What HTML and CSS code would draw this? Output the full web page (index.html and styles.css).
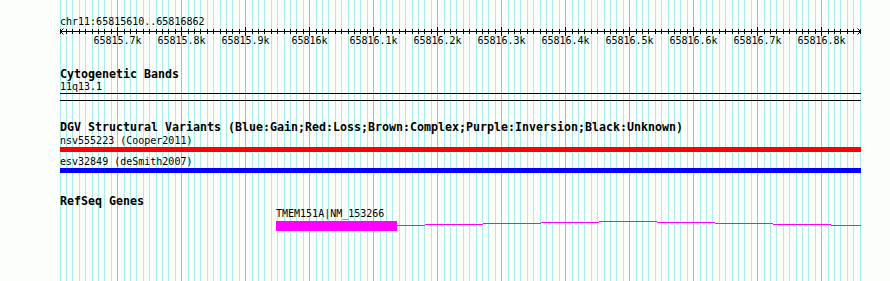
FILE: index.html
```html
<!DOCTYPE html>
<html lang="en">
<head>
  <meta charset="UTF-8" />
  <title>chr11:65815610..65816862</title>
  <link rel="stylesheet" href="styles.css">
</head>
<body>
  <div class="panel">
    <div class="coord">chr11:65815610..65816862</div>

    <svg class="ruler" width="801" height="19" viewBox="0 0 801 19">
      <defs>
        <pattern id="ticks" patternUnits="userSpaceOnUse" width="64" height="19">
          <path d="M0.5 2v5M6.5 2v5M12.5 2v5M19.5 2v5M25.5 2v5M32.5 2v5M38.5 2v5M44.5 2v5M51.5 2v5" stroke="#000" shape-rendering="crispEdges"/>
          <path d="M57.5 0v9" stroke="#000" shape-rendering="crispEdges"/>
        </pattern>
      </defs>
      <rect x="0" y="0" width="801" height="10" fill="url(#ticks)"/>
      <path d="M0 4.5H801" stroke="#000" shape-rendering="crispEdges"/>
      <path d="M3.5 1.5L0.5 4.5L3.5 7.5M797.5 1.5L800.5 4.5L797.5 7.5" stroke="#000" fill="none"/>
      <g class="tick-labels" text-anchor="middle">
        <text x="57.5" y="17">65815.7k</text>
        <text x="121.5" y="17">65815.8k</text>
        <text x="185.5" y="17">65815.9k</text>
        <text x="249.5" y="17">65816k</text>
        <text x="313.5" y="17">65816.1k</text>
        <text x="377.5" y="17">65816.2k</text>
        <text x="441.5" y="17">65816.3k</text>
        <text x="505.5" y="17">65816.4k</text>
        <text x="569.5" y="17">65816.5k</text>
        <text x="633.5" y="17">65816.6k</text>
        <text x="697.5" y="17">65816.7k</text>
        <text x="761.5" y="17">65816.8k</text>
      </g>
    </svg>

    <section class="track cyto">
      <div class="track-title">Cytogenetic Bands</div>
      <div class="feat-label">11q13.1</div>
      <div class="band"></div>
    </section>

    <section class="track dgv">
      <div class="track-title">DGV Structural Variants (Blue:Gain;Red:Loss;Brown:Complex;Purple:Inversion;Black:Unknown)</div>
      <div class="feat-label">nsv555223 (Cooper2011)</div>
      <div class="sv-bar loss"></div>
      <div class="feat-label gap">esv32849 (deSmith2007)</div>
      <div class="sv-bar gain"></div>
    </section>

    <section class="track refseq">
      <div class="track-title">RefSeq Genes</div>
      <div class="feat-label gene-label">TMEM151A|NM_153266</div>
      <svg class="gene" width="801" height="10" viewBox="0 0 801 10" shape-rendering="crispEdges">
        <rect x="216" y="0" width="121" height="10" fill="#ff00ff"/>
        <g fill="#ff00ff">
          <rect x="337" y="4" width="28" height="1"/>
          <rect x="365" y="3" width="58" height="1"/>
          <rect x="423" y="2" width="58" height="1"/>
          <rect x="481" y="1" width="58" height="1"/>
          <rect x="539" y="0" width="58" height="1"/>
          <rect x="597" y="1" width="58" height="1"/>
          <rect x="655" y="2" width="58" height="1"/>
          <rect x="713" y="3" width="58" height="1"/>
          <rect x="771" y="4" width="30" height="1"/>
        </g>
      </svg>
    </section>
  </div>
</body>
</html>
```

FILE: styles.css
```css
* { box-sizing: border-box; }

html, body {
  margin: 0;
  background: #fcfefc;
}

body {
  font-family: "DejaVu Sans Mono", monospace;
  font-size: 10px;
  color: #000;
  overflow: hidden;
}

/* track area, grid: minor line every 10bp, major every 100bp */
.panel {
  margin-left: 60px;
  width: 801px;
  height: 281px;
  padding-top: 16px;
  background-image: linear-gradient(to right,
    #a8ecec 0 1px, transparent 1px 6px,
    #a8ecec 6px 7px, transparent 7px 12px,
    #a8ecec 12px 13px, transparent 13px 19px,
    #a8ecec 19px 20px, transparent 20px 25px,
    #a8ecec 25px 26px, transparent 26px 32px,
    #a8ecec 32px 33px, transparent 33px 38px,
    #a8ecec 38px 39px, transparent 39px 44px,
    #a8ecec 44px 45px, transparent 45px 51px,
    #a8ecec 51px 52px, transparent 52px 57px,
    #88c6ec 57px 58px, transparent 58px 64px);
  background-size: 64px 100%;
  background-repeat: repeat-x;
}

.coord {
  line-height: 11px;
  height: 11px;
}

.ruler {
  display: block;
  overflow: visible;
}

.tick-labels text {
  font-family: "DejaVu Sans Mono", monospace;
  font-size: 10px;
  fill: #000;
}

.track-title {
  font-weight: bold;
  font-size: 11.63px;
  line-height: 12px;
  height: 12px;
  white-space: nowrap;
}

.feat-label {
  line-height: 13px;
  height: 13px;
  white-space: nowrap;
}

.cyto { margin-top: 22px; }
.dgv { margin-top: 20px; }
.refseq { margin-top: 22px; }

.band {
  height: 8px;
  border-top: 1px solid #000;
  border-bottom: 1px solid #000;
}

.dgv .feat-label { margin-top: 1px; }
.dgv .feat-label.gap { margin-top: 3px; }

.sv-bar { height: 5px; }
.sv-bar.loss { background: #ff0000; }
.sv-bar.gain { background: #0000ff; }

.gene-label {
  padding-left: 216px;
}

.gene {
  display: block;
  margin-top: 1px;
}
```
